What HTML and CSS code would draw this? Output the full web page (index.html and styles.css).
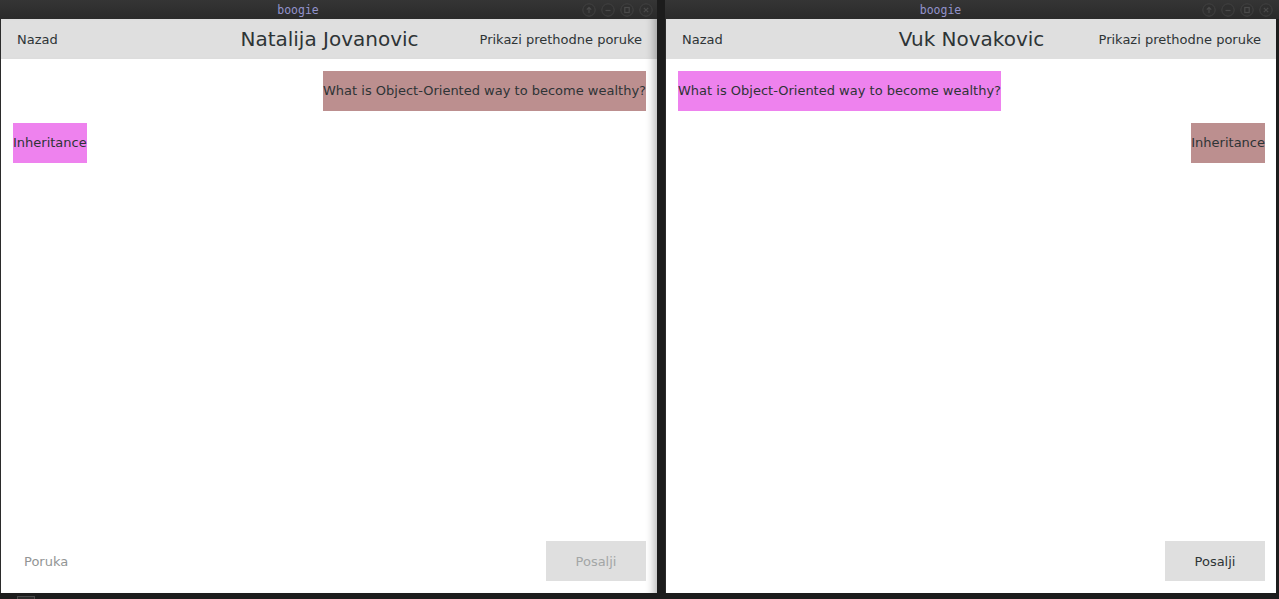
FILE: index.html
```html
<!DOCTYPE html>
<html lang="sr">
<head>
<meta charset="utf-8">
<title>boogie</title>
<link rel="stylesheet" href="styles.css">
</head>
<body>
<div class="desktop">
  <section class="window window-left">
    <div class="titlebar">
      <span class="title">boogie</span>
      <div class="wm-buttons">
        <svg class="wm-btn" viewBox="0 0 14 14"><circle cx="7" cy="7" r="6.2"/><path d="M7 10V4.5M4.8 6.6L7 4.3l2.2 2.3"/></svg>
        <svg class="wm-btn" viewBox="0 0 14 14"><circle cx="7" cy="7" r="6.2"/><path d="M4.5 7.5h5"/></svg>
        <svg class="wm-btn" viewBox="0 0 14 14"><circle cx="7" cy="7" r="6.2"/><rect x="4.8" y="4.5" width="4.4" height="5"/></svg>
        <svg class="wm-btn" viewBox="0 0 14 14"><circle cx="7" cy="7" r="6.2"/><path d="M4.8 4.8l4.4 4.4M9.2 4.8l-4.4 4.4"/></svg>
      </div>
    </div>
    <div class="app">
      <header class="appbar">
        <span class="nav nav-back">Nazad</span>
        <span class="contact">Natalija Jovanovic</span>
        <span class="nav nav-history">Prikazi prethodne poruke</span>
      </header>
      <main class="messages">
        <div class="msg own">What is Object-Oriented way to become wealthy?</div>
        <div class="msg other">Inheritance</div>
      </main>
      <footer class="composer">
        <div class="field"><span class="placeholder">Poruka</span></div>
        <button class="send" disabled>Posalji</button>
      </footer>
    </div>
  </section>

  <section class="window window-right">
    <div class="titlebar">
      <span class="title">boogie</span>
      <div class="wm-buttons">
        <svg class="wm-btn" viewBox="0 0 14 14"><circle cx="7" cy="7" r="6.2"/><path d="M7 10V4.5M4.8 6.6L7 4.3l2.2 2.3"/></svg>
        <svg class="wm-btn" viewBox="0 0 14 14"><circle cx="7" cy="7" r="6.2"/><path d="M4.5 7.5h5"/></svg>
        <svg class="wm-btn" viewBox="0 0 14 14"><circle cx="7" cy="7" r="6.2"/><rect x="4.8" y="4.5" width="4.4" height="5"/></svg>
        <svg class="wm-btn" viewBox="0 0 14 14"><circle cx="7" cy="7" r="6.2"/><path d="M4.8 4.8l4.4 4.4M9.2 4.8l-4.4 4.4"/></svg>
      </div>
    </div>
    <div class="app">
      <header class="appbar">
        <span class="nav nav-back">Nazad</span>
        <span class="contact">Vuk Novakovic</span>
        <span class="nav nav-history">Prikazi prethodne poruke</span>
      </header>
      <main class="messages">
        <div class="msg other">What is Object-Oriented way to become wealthy?</div>
        <div class="msg own">Inheritance</div>
      </main>
      <footer class="composer">
        <div class="field"></div>
        <button class="send">Posalji</button>
      </footer>
    </div>
  </section>
</div>
<div class="taskbar">
  <span class="task-item"></span>
</div>
</body>
</html>
```

FILE: styles.css
```css
* { box-sizing: border-box; }

html, body {
  margin: 0;
  padding: 0;
  background: #1c1c1c;
  overflow: hidden;
}

body {
  width: 1279px;
  height: 599px;
  font-family: "DejaVu Sans", "Liberation Sans", sans-serif;
  color: #2e3436;
}

.desktop {
  display: flex;
  gap: 8px;
  height: 593px;
}

.window {
  display: flex;
  flex-direction: column;
  height: 593px;
}

.window-left { width: 657px; }
.window-right { width: 614px; }

.titlebar {
  height: 19px;
  flex: none;
  display: flex;
  align-items: center;
  background: linear-gradient(#353535, #2a2a2a);
  padding-right: 4px;
}

.window-right .titlebar { padding-right: 6px; }

.title {
  flex: 1;
  text-align: center;
  padding-left: 14px;
  font-family: "DejaVu Sans Mono", "Liberation Mono", monospace;
  font-size: 11.5px;
  font-weight: normal;
  color: #9393cc;
  line-height: 19px;
  padding-top: 1px;
}

.wm-buttons {
  display: flex;
  gap: 5px;
}

.wm-btn {
  width: 14px;
  height: 14px;
  display: block;
}

.wm-btn circle {
  fill: #2f2f2f;
  stroke: #424242;
  stroke-width: 1;
}

.wm-btn path, .wm-btn rect {
  fill: none;
  stroke: #4a4a4a;
  stroke-width: 1.2;
}

.app {
  flex: 1;
  display: flex;
  flex-direction: column;
  background: #ffffff;
  border-left: 1px solid #2b2b2b;
}

.window-left .app {
  box-shadow: inset -10px 0 9px -7px rgba(0, 0, 0, 0.28);
}

.window-right .app {
  border-right: 3px solid #1c1c1c;
}

.appbar {
  height: 40px;
  flex: none;
  display: grid;
  grid-template-columns: 1fr auto 1fr;
  align-items: center;
  padding: 0 15px 0 16px;
  background: #dfdfdf;
}

.window-left .appbar {
  box-shadow: inset -10px 0 9px -7px rgba(0, 0, 0, 0.28);
}

.nav {
  font-size: 13px;
  color: #2e3436;
}

.nav-back { justify-self: start; }
.nav-history { justify-self: end; }

.contact {
  font-size: 20px;
  color: #2e3436;
}

.messages {
  flex: 1;
  display: flex;
  flex-direction: column;
  gap: 12px;
  padding: 12px 11px 0 12px;
}

.msg {
  height: 40px;
  line-height: 40px;
  font-size: 13px;
  white-space: nowrap;
  color: #2e3436;
}

.msg.own {
  align-self: flex-end;
  background: #bc8f8f;
}

.msg.other {
  align-self: flex-start;
  background: #ee82ee;
}

.composer {
  flex: none;
  display: flex;
  align-items: center;
  gap: 12px;
  padding: 0 11px 12px 12px;
}

.field {
  flex: 1;
  height: 40px;
  display: flex;
  align-items: center;
  padding-left: 11px;
}

.placeholder {
  font-size: 13px;
  color: #929595;
}

.send {
  width: 100px;
  height: 40px;
  border: none;
  background: #dfdfdf;
  font-family: "DejaVu Sans", "Liberation Sans", sans-serif;
  font-size: 13px;
  color: #2e3436;
  padding: 0;
}

.send:disabled {
  color: #a3a6a6;
}

.taskbar {
  height: 6px;
  display: flex;
  align-items: flex-end;
  padding-left: 17px;
}

.task-item {
  width: 18px;
  height: 3px;
  border: 1px solid #4a4a4a;
  border-bottom: none;
  background: #2a2a2a;
}
```
